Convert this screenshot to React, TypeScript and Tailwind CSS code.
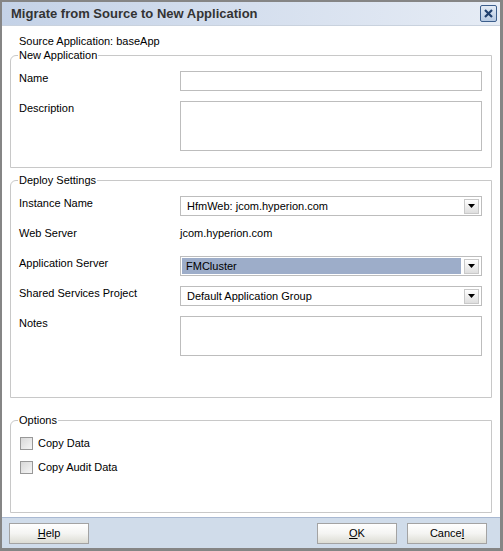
import React from "react"

function Caret() {
  return (
    <div className="mr-[2px] flex h-[15px] w-[15px] shrink-0 items-center justify-center border border-[#c9c9c9] bg-gradient-to-b from-white to-[#dedede]">
      <svg width="7" height="4" viewBox="0 0 7 4">
        <path d="M0 0h7L3.5 4z" fill="#000" />
      </svg>
    </div>
  )
}

function Select({ value, selected }: { value: string; selected?: boolean }) {
  return (
    <div className="flex h-[20px] flex-1 items-center border border-[#bdbdbd] bg-white">
      {selected ? (
        <div className="ml-px mr-[3px] flex h-[16px] flex-1 items-center bg-[#9dadc9] pl-[4px]">{value}</div>
      ) : (
        <div className="flex-1 pl-[6px]">{value}</div>
      )}
      <Caret />
    </div>
  )
}

function Row({ label, children }: { label: string; children: React.ReactNode }) {
  return (
    <div className="flex items-start">
      <div className="w-[161px] shrink-0 leading-[14px]">{label}</div>
      {children}
    </div>
  )
}

function Box({ h }: { h: string }) {
  return <div className={`flex-1 border border-[#bdbdbd] bg-white ${h}`} />
}

function Checkbox({ label }: { label: string }) {
  return (
    <div className="flex items-center">
      <div className="ml-px h-[13px] w-[13px] border border-[#989898] bg-gradient-to-br from-[#d8d8d8] to-[#f6f6f6]" />
      <span className="ml-[5px] leading-[14px]">{label}</span>
    </div>
  )
}

function Btn({ children }: { children: React.ReactNode }) {
  return (
    <button className="flex h-[21px] w-[80px] items-center justify-center border border-[#a3a3a3] bg-gradient-to-b from-white via-[#f4f4f2] to-[#dcdcd4] text-[11px] leading-none text-black">
      {children}
    </button>
  )
}

export default function App() {
  return (
    <div className="flex h-[551px] w-[503px] flex-col border-t-2 border-r-[3px] border-b-[3px] border-l-2 border-[#858585] bg-white font-['Liberation_Sans',Arial,sans-serif] text-[11px] text-black">
      <div className="flex h-[24px] shrink-0 items-center justify-between border-b border-[#c9d2de] bg-gradient-to-r from-[#c4d2e7] to-[#e6ecf5] pl-[9px] pr-[3px]">
        <span className="text-[13px] font-bold text-[#333]">Migrate from Source to New Application</span>
        <div className="flex h-[17px] w-[17px] items-center justify-center rounded-[2px] border border-[#3c5e8c] bg-gradient-to-b from-[#e4ecf6] to-[#b6c9e2]">
          <svg width="9" height="9" viewBox="0 0 9 9">
            <path d="M1 1l7 7M8 1L1 8" stroke="#1f3f6e" strokeWidth="2.2" />
          </svg>
        </div>
      </div>

      <div className="flex flex-1 flex-col">
        <div className="mt-[8px] pl-[17px] leading-[14px]">Source Application: baseApp</div>

        <fieldset className="mx-[8px] mt-px rounded-tl-[6px] border border-[#c8c8c8] pr-[9px] pb-[16px] pl-[8px]">
          <legend className="-ml-px px-px leading-[13px]">New Application</legend>
          <div className="flex flex-col gap-[10px] pt-[9px]">
            <Row label="Name">
              <Box h="h-[20px]" />
            </Row>
            <Row label="Description">
              <Box h="h-[50px]" />
            </Row>
          </div>
        </fieldset>

        <fieldset className="mx-[8px] mt-[6px] rounded-tl-[6px] border border-[#c8c8c8] pr-[9px] pb-[41px] pl-[8px]">
          <legend className="-ml-px px-px leading-[13px]">Deploy Settings</legend>
          <div className="flex flex-col gap-[10px] pt-[9px]">
            <Row label="Instance Name">
              <Select value="HfmWeb: jcom.hyperion.com" />
            </Row>
            <Row label="Web Server">
              <div className="h-[20px] leading-[14px]">jcom.hyperion.com</div>
            </Row>
            <Row label="Application Server">
              <Select value="FMCluster" selected />
            </Row>
            <Row label="Shared Services Project">
              <Select value="Default Application Group" />
            </Row>
            <Row label="Notes">
              <Box h="h-[40px]" />
            </Row>
          </div>
        </fieldset>

        <fieldset className="mx-[8px] mt-[16px] mb-[4px] flex-1 rounded-tl-[6px] border border-[#c8c8c8] pr-[9px] pl-[8px]">
          <legend className="-ml-px px-px leading-[13px]">Options</legend>
          <div className="flex flex-col gap-[10px] pt-[9px]">
            <Checkbox label="Copy Data" />
            <Checkbox label="Copy Audit Data" />
          </div>
        </fieldset>
      </div>

      <div className="flex h-[31px] shrink-0 items-start border-t border-[#a9b9d2] bg-[#d0dcea] pt-[5px] pr-[13px] pl-[7px]">
        <Btn>
          <span className="underline">H</span>elp
        </Btn>
        <div className="flex-1" />
        <Btn>
          <span className="underline">O</span>K
        </Btn>
        <div className="w-[10px]" />
        <Btn>
          Cance<span className="underline">l</span>
        </Btn>
      </div>
    </div>
  )
}
